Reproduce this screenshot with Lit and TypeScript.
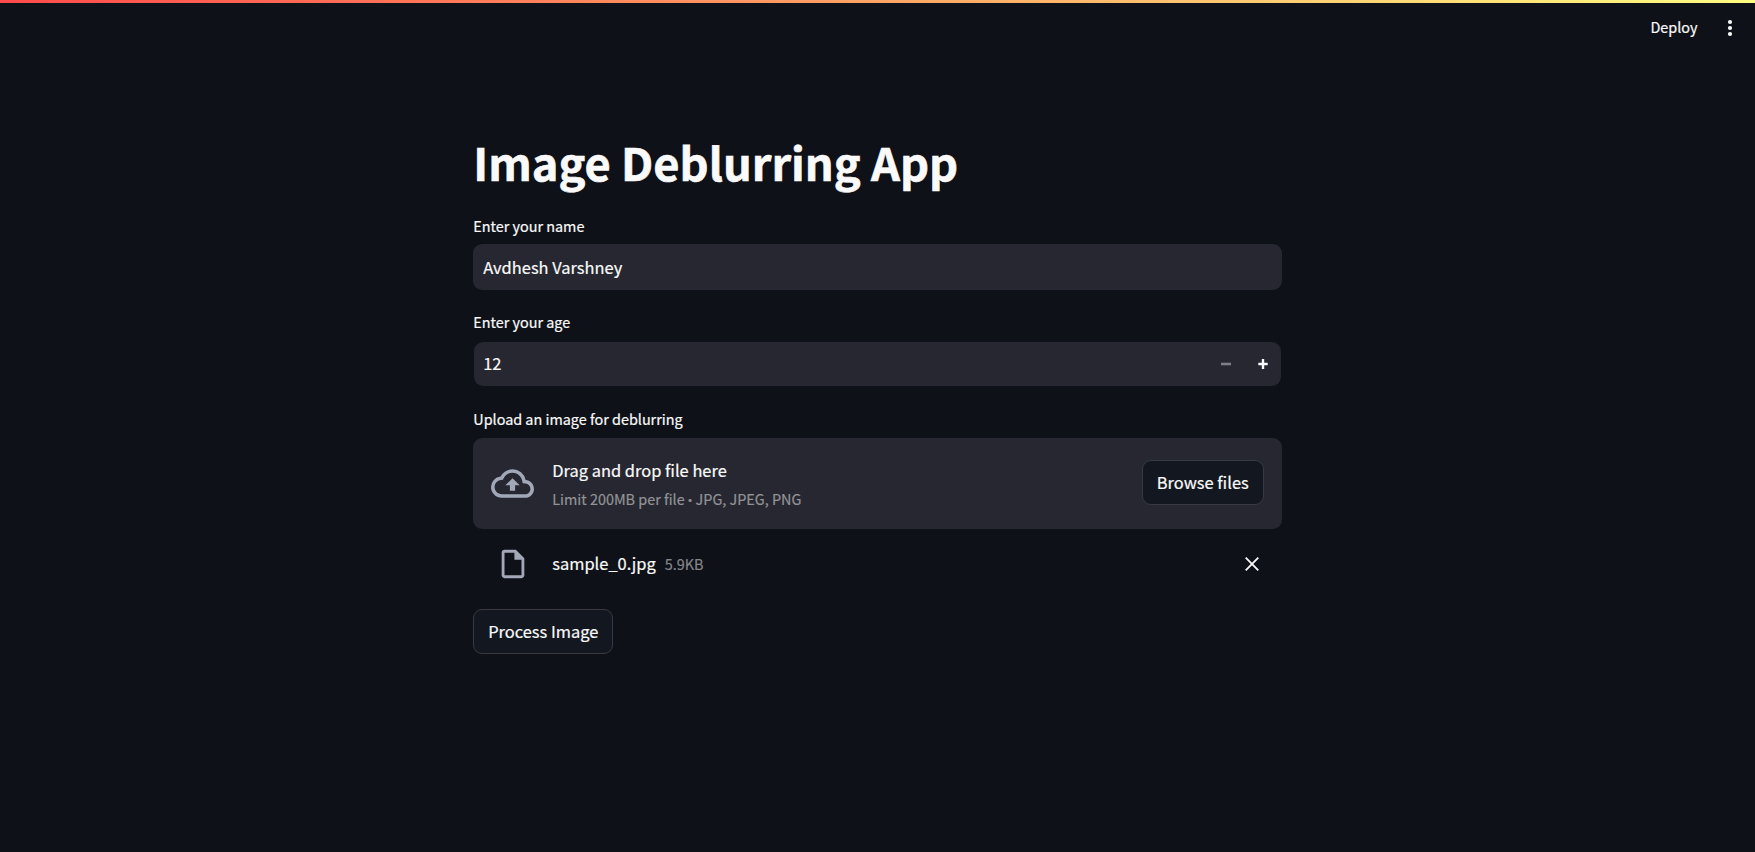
import { LitElement, html, css } from "lit";
import { customElement, state } from "lit/decorators.js";

@customElement("app-root")
export class AppRoot extends LitElement {
  @state() private name = "Avdhesh Varshney";
  @state() private age = 12;

  static styles = css`
    :host {
      display: block;
      height: 852px;
      overflow: hidden;
      background: #0e1117;
      color: #fafafa;
      font-family: "Noto Sans CJK SC", "Noto Sans", sans-serif;
      font-size: 16.45px;
      -webkit-text-stroke: 0.2px currentColor;
    }
    * { box-sizing: border-box; }
    .decoration {
      height: 3px;
      background: linear-gradient(90deg, #ff4b4b, #fffd80);
    }
    .header {
      height: 49px;
      display: flex;
      justify-content: flex-end;
      align-items: center;
      padding-right: 17px;
      gap: 24.5px;
    }
    .deploy { font-size: 14.4px; line-height: 20px; padding-bottom: 2px; }
    .dots { display: block; }
    .main {
      width: 808.5px;
      margin: 80px auto 0;
      display: flex;
      flex-direction: column;
      align-items: stretch;
    }
    .title {
      margin: 0 0 23.5px;
      font-size: 45.2px;
      line-height: 60px;
      font-weight: 700;
      -webkit-text-stroke: 0.6px currentColor;
    }
    .label { font-size: 14.4px; line-height: 20px; margin-bottom: 8.8px; }
    .input {
      height: 46px;
      border-radius: 9px;
      background: #262730;
      padding: 0 10px;
      display: flex;
      align-items: center;
      margin-bottom: 22px;
      line-height: 24px;
    }
    .number {
      border: 1px solid transparent;
      background-clip: padding-box;
      padding: 0 0 0 9px;
      border-radius: 10px;
    }
    .value { flex: 1; }
    .number .value { padding-bottom: 1.5px; }
    .step { width: 36.5px; height: 44px; display: grid; place-items: center; }
    .dropzone {
      height: 91px;
      border-radius: 9px;
      background: #262730;
      padding: 0 18px;
      display: flex;
      align-items: center;
    }
    .cloud { width: 43px; height: 43px; fill: #a3a8b8; margin-right: 18px; }
    .hint { flex: 1; padding-top: 3px; }
    .drag { line-height: 28px; }
    .limit { font-size: 14.4px; line-height: 29px; color: #929397; }
    .bullet { font-family: "Open Sans", sans-serif; font-size: 13.5px; line-height: 1; margin: 0 -0.3px; }
    .button {
      height: 44.5px;
      border: 1px solid #383a42;
      border-radius: 9px;
      background: #131720;
      color: inherit;
      font: inherit;
      line-height: 24px;
      padding: 0 0 1px;
      -webkit-text-stroke: 0.2px currentColor;
    }
    .browse { width: 122px; margin-bottom: 1.5px; }
    .process { width: 140px; }
    .file {
      height: 71px;
      margin-bottom: 9.5px;
      padding: 0 23px 0 23px;
      display: flex;
      align-items: center;
    }
    .doc { width: 34px; height: 34px; fill: #a3a8b8; margin-right: 22px; }
    .filename { line-height: 24px; margin-right: 9px; padding-bottom: 3px; }
    .size { flex: 1; font-size: 14.4px; line-height: 24px; color: #85868a; padding-bottom: 1px; }
  `;

  render() {
    return html`
      <div class="decoration"></div>
      <header class="header">
        <span class="deploy">Deploy</span>
        <svg class="dots" width="16" height="18" viewBox="0 0 16 18" fill="#fafafa">
          <circle cx="8" cy="3" r="2.1" /><circle cx="8" cy="9" r="2.1" /><circle cx="8" cy="15" r="2.1" />
        </svg>
      </header>
      <main class="main">
        <h1 class="title">Image Deblurring App</h1>
        <div class="label">Enter your name</div>
        <div class="input"><span class="value">${this.name}</span></div>
        <div class="label">Enter your age</div>
        <div class="input number">
          <span class="value">${this.age}</span>
          <span class="step"><svg width="10" height="10" viewBox="0 0 10 10" fill="#7d7e87"><path d="M0 3.7h10v2.6H0z" /></svg></span>
          <span class="step"><svg width="10" height="10" viewBox="0 0 10 10" fill="#fafafa"><path d="M0.3 3.8h3.5V0h2.4v3.8h3.5v2.4H6.2V10H3.8V6.2H0.3z" /></svg></span>
        </div>
        <div class="label">Upload an image for deblurring</div>
        <section class="dropzone">
          <svg class="cloud" viewBox="0 0 24 24">
            <path d="M19.35 10.04A7.49 7.49 0 0 0 12 4C9.11 4 6.6 5.64 5.35 8.04A5.994 5.994 0 0 0 0 14c0 3.31 2.69 6 6 6h13c2.76 0 5-2.24 5-5 0-2.64-2.05-4.78-4.65-4.96zM19 18H6c-2.21 0-4-1.79-4-4 0-2.05 1.53-3.76 3.56-3.97l1.07-.11.5-.95A5.469 5.469 0 0 1 12 6c2.62 0 4.88 1.86 5.39 4.43l.3 1.5 1.53.11A2.98 2.98 0 0 1 22 15c0 1.65-1.35 3-3 3zM8 13h2.55v3h2.9v-3H16l-4-4z" />
          </svg>
          <div class="hint">
            <div class="drag">Drag and drop file here</div>
            <div class="limit">Limit 200MB per file <span class="bullet">•</span> JPG, JPEG, PNG</div>
          </div>
          <button class="button browse">Browse files</button>
        </section>
        <div class="file">
          <svg class="doc" viewBox="0 0 24 24">
            <path d="M14 2H6c-1.1 0-1.99.9-1.99 2L4 20c0 1.1.89 2 1.99 2H18c1.1 0 2-.9 2-2V8l-6-6zM6 20V4h7v5h5v11H6z" />
          </svg>
          <span class="filename">sample_0.jpg</span>
          <span class="size">5.9KB</span>
          <svg width="14" height="14" viewBox="0 0 14 14" fill="none" stroke="#fafafa" stroke-width="1.8"><path d="M0.7 0.7l12.6 12.6M13.3 0.7L0.7 13.3" /></svg>
        </div>
        <button class="button process">Process Image</button>
      </main>
    `;
  }
}
